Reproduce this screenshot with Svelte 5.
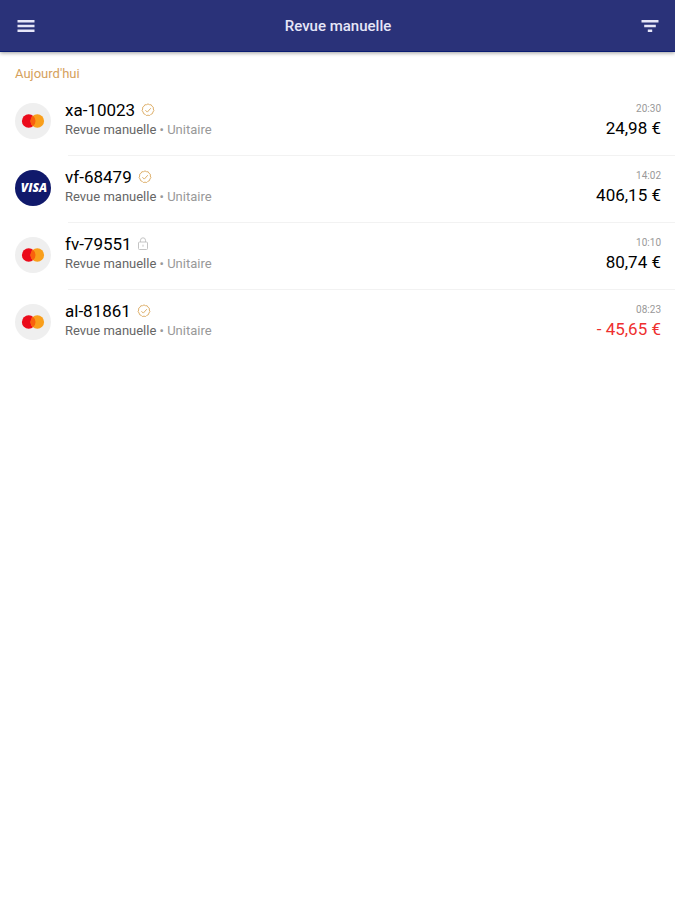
<script lang="ts">
	const transactions = [
		{ id: 'xa-10023', card: 'mastercard', secured: true, time: '20:30', amount: '24,98 €', refund: false },
		{ id: 'vf-68479', card: 'visa', secured: true, time: '14:02', amount: '406,15 €', refund: false },
		{ id: 'fv-79551', card: 'mastercard', secured: false, time: '10:10', amount: '80,74 €', refund: false },
		{ id: 'al-81861', card: 'mastercard', secured: true, time: '08:23', amount: '- 45,65 €', refund: true },
	];
</script>

<svelte:head>
	<title>Revue manuelle</title>
</svelte:head>

<div class="page">
	<header class="topbar">
		<button class="icon-btn" type="button" aria-label="Menu">
			<svg width="24" height="24" viewBox="0 0 24 24" fill="currentColor">
				<path d="M3.5 18h17v-2.6h-17V18zm0-4.7h17v-2.6h-17v2.6zm0-7.3v2.6h17V6h-17z" />
			</svg>
		</button>
		<h1>Revue manuelle</h1>
		<button class="icon-btn" type="button" aria-label="Filtrer">
			<svg width="24" height="24" viewBox="0 0 24 24" fill="currentColor">
				<path d="M9.8 18h4.4v-2.5H9.8V18zM3.5 6v2.5h17V6h-17zm2.7 7.2h11.6v-2.4H6.2v2.4z" />
			</svg>
		</button>
	</header>

	<main>
		<h2>Aujourd'hui</h2>
		<ul class="list">
			{#each transactions as t}
				<li class="row">
					{#if t.card === 'visa'}
						<svg class="card-logo" viewBox="0 0 36 36" role="img" aria-label="Visa">
							<circle cx="18" cy="18" r="18" fill="#10196b" />
							<text class="visa" x="19" y="22" text-anchor="middle">VISA</text>
						</svg>
					{:else}
						<svg class="card-logo" viewBox="0 0 36 36" role="img" aria-label="Mastercard">
							<circle cx="18" cy="18" r="18" fill="#efefef" />
							<circle cx="13.7" cy="18" r="6.8" fill="#eb0b1b" />
							<circle cx="22.3" cy="18" r="6.8" fill="#f99f1b" />
							<path d="M18 12.7a6.8 6.8 0 0 1 0 10.6a6.8 6.8 0 0 1 0-10.6z" fill="#f9610d" />
						</svg>
					{/if}
					<div class="details">
						<div class="text">
							<div class="name">
								<span>{t.id}</span>
								{#if t.secured}
									<svg class="status ok" viewBox="0 0 14 14" role="img" aria-label="Validé">
										<path d="M7 .9l1.5.8 1.7.1.8 1.5 1.4 1-.1 1.7.6 1.6-1 1.4-.4 1.6-1.6.7-1.2 1.2-1.7-.3-1.7.3-1.2-1.2-1.6-.7-.4-1.6-1-1.4.6-1.6L1.6 4.3l1.4-1 .8-1.5 1.7-.1z" />
										<path d="M4.4 7.2l1.9 1.9 3.5-3.9" />
									</svg>
								{:else}
									<svg class="status lock" viewBox="2 0 10 14" role="img" aria-label="Verrouillé">
										<rect x="2.5" y="5" width="9" height="7.5" rx="1" />
										<path d="M4.5 5V3.3a2.5 2.5 0 0 1 5 0V5M7 7.7v2" />
									</svg>
								{/if}
							</div>
							<div class="sub">Revue manuelle <span>• Unitaire</span></div>
						</div>
						<div class="value">
							<time>{t.time}</time>
							<div class="amount" class:refund={t.refund}>{t.amount}</div>
						</div>
					</div>
				</li>
			{/each}
		</ul>
	</main>
</div>

<style>
	:global(body) { margin: 0; background: #fff; }

	.page { font-family: Roboto, sans-serif; color: #000; }

	.topbar {
		display: flex; align-items: center; justify-content: space-between;
		height: 52px; padding: 1px 13px 0 14px; box-sizing: border-box;
		background: #2a3279; color: #e6e6f8;
		border-bottom: 1px solid #0a1c72;
		box-shadow: 0 1px 4px rgba(0, 0, 0, 0.4);
	}
	.topbar h1 { margin: 0; font-size: 15px; line-height: 20px; font-weight: 500; }
	.icon-btn {
		display: flex; padding: 0; border: none;
		background: none; color: inherit; cursor: pointer;
	}

	h2 {
		margin: 0; padding: 14px 15px 0;
		font-size: 13px; line-height: 16px; font-weight: 400; color: #d5a15c;
	}

	.list { margin: 0; padding: 7px 0 0; list-style: none; }
	.row { display: flex; padding-left: 15px; }
	.card-logo { width: 36px; height: 36px; margin-top: 14px; flex-shrink: 0; }
	.visa {
		font-family: "Open Sans", sans-serif; font-size: 12px;
		font-weight: 800; font-style: italic; fill: #fff;
	}

	/* the divider starts slightly inside the text column */
	.details {
		display: flex; flex: 1; justify-content: space-between;
		margin-left: 14px; padding: 11px 14px 16px 0;
		background: linear-gradient(#f2f2f2, #f2f2f2) 3px 100% / 100% 1px no-repeat;
	}
	.row:last-child .details { background: none; }

	.name {
		display: flex; align-items: center; gap: 6px;
		font-size: 17px; line-height: 20px; font-weight: 400;
	}
	.status { height: 14px; fill: none; }
	.status.ok { width: 14px; stroke: #deb06c; }
	.status.lock { width: 10px; stroke: #c4c4c4; }

	.sub { font-size: 13px; line-height: 20px; color: #666; }
	.sub span { color: #999; }

	.value { text-align: right; }
	time { display: block; font-size: 10px; line-height: 18px; color: #999; }
	.amount { font-size: 17px; line-height: 20px; font-weight: 400; }
	.amount.refund { color: #ee2f2f; }
</style>
